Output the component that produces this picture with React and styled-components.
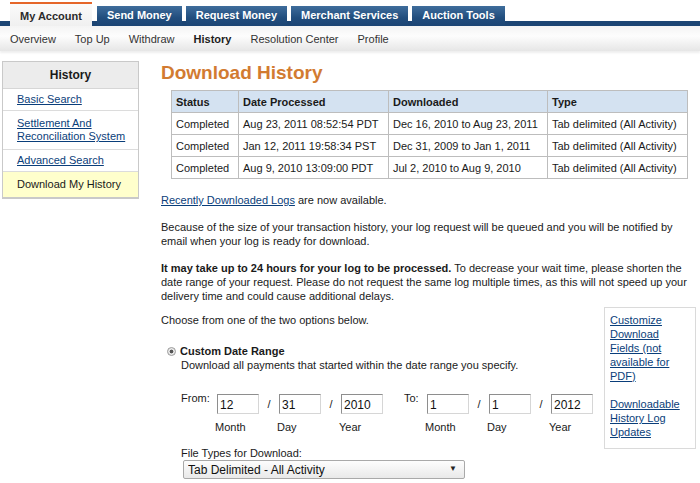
import React from 'react'
import styled, { createGlobalStyle } from 'styled-components'

const Global = createGlobalStyle`
body {
  margin: 0;
  background: #fff;
  font-family: "Liberation Sans", Arial, sans-serif;
  font-size: 11px;
  color: #1a1a1a;
}
`;

const Page = styled.div`
width: 700px;
`;

const TabBar = styled.div`
display: flex;
align-items: flex-end;
gap: 4px;
height: 24px;
padding: 2px 0 0 10px;
background: linear-gradient(to bottom, transparent 21px, #1c4574 21px);
`;

const Tab = styled.div`
box-sizing: border-box;
padding: 0 10px;
font-weight: bold;
font-size: 11px;
display: flex;
align-items: center;
${p => p.active ? `
  height: 24px;
  padding-top: 2px;
  border-top: 2px solid #e5662a;
  background: linear-gradient(#fbfbfb, #f0f0f0);
  color: #2b2b2b;
  margin-right: 1px;
` : `
  height: 20px;
  padding-bottom: 3px;
  background: linear-gradient(#3f6d9c, #214d7d 60%, #1c4574);
  color: #fff;
`}
`;

const SubNav = styled.div`
display: flex;
gap: 19px;
height: 24px;
align-items: center;
padding: 1px 0 0 10px;
background: linear-gradient(#f4f4f4, #fdfdfd 40%, #e6e6e6);
box-shadow: 0 2px 2px rgba(0, 0, 0, 0.07);
`;

const SubItem = styled.span`
color: ${p => p.active ? '#1e1e1e' : '#333'};
font-weight: ${p => p.active ? 'bold' : 'normal'};
`;

const Body = styled.div`
display: flex;
align-items: flex-start;
padding-top: 10px;
`;

const Sidebar = styled.div`
box-sizing: border-box;
width: 137px;
margin-left: 2px;
border: 1px solid #c9c9c9;
border-bottom-width: 2px;
`;

const SideHead = styled.div`
height: 26px;
line-height: 26px;
text-align: center;
font-weight: bold;
font-size: 12px;
background: #ececec;
border-bottom: 1px solid #d6d6d6;
`;

const SideItem = styled.div`
padding: ${p => p.pad}px 4px ${p => p.pad}px 14px;
line-height: 13px;
border-bottom: ${p => p.last ? 'none' : '1px solid #dcdcdc'};
background: ${p => p.current ? '#ffffcc' : '#fff'};
`;

const Link = styled.a`
color: #0a3e7a;
text-decoration: underline;
cursor: pointer;
`;

const Main = styled.div`
margin-left: 22px;
width: 536px;
`;

const Title = styled.h1`
margin: 0;
font-size: 19px;
line-height: 24px;
font-weight: bold;
color: #d27b31;
`;

const Table = styled.table`
margin: 5px 0 0 10px;
width: 516px;
border-collapse: collapse;
table-layout: fixed;
`;

const Th = styled.th`
background: #d4e2f1;
text-align: left;
font-weight: bold;
border: 1px solid #bdbdbd;
padding: 0 4px;
height: 21px;
`;

const Td = styled.td`
border: 1px solid #bdbdbd;
padding: 0 4px;
height: 21px;
white-space: nowrap;
`;

const Para = styled.p`
margin: ${p => p.top || 13}px 0 0;
line-height: 14px;
width: 528px;
`;

const OptionsRow = styled.div`
display: flex;
justify-content: space-between;
align-items: flex-start;
margin-top: 10px;
`;

const OptionsCol = styled.div`
width: 440px;
`;

const Choose = styled.div`
line-height: 14px;
`;

const OptionHead = styled.label`
display: flex;
align-items: center;
margin: 17px 0 0 6px;
font-weight: bold;
line-height: 14px;
`;

const Radio = styled.span`
box-sizing: border-box;
width: 9px;
height: 9px;
border-radius: 50%;
border: 1px solid #9a9a9a;
background: radial-gradient(circle, #555 0 1.6px, #e8e8e8 2.2px);
margin-right: 4px;
`;

const OptionBody = styled.div`
margin-left: 20px;
`;

const Desc = styled.div`
line-height: 14px;
`;

const DateRow = styled.div`
display: flex;
align-items: flex-start;
margin-top: 19px;
`;

const RangeLabel = styled.div`
width: ${p => p.w}px;
line-height: 14px;
`;

const Field = styled.div`
display: flex;
flex-direction: column;
padding-top: 3px;
`;

const Input = styled.input`
box-sizing: border-box;
width: 42px;
height: 20px;
padding: 1px 2px 0;
font-family: "Liberation Sans", Arial, sans-serif;
font-size: 12px;
color: #111;
border: 1px solid #d6d6d6;
border-top-color: #8e8e8e;
border-left-color: #8e8e8e;
background: #fff;
outline: none;
`;

const Caption = styled.span`
margin-top: 6px;
margin-left: -2px;
line-height: 14px;
`;

const Slash = styled.span`
width: 20px;
text-align: center;
line-height: 20px;
margin-top: 3px;
`;

const Spacer = styled.span`
width: 21px;
`;

const FileLabel = styled.div`
margin-top: 12px;
line-height: 14px;
`;

const SelectWrap = styled.div`
position: relative;
width: 282px;
margin: 0 0 0 2px;
`;

const Select = styled.select`
appearance: none;
box-sizing: border-box;
width: 100%;
height: 19px;
padding: 0 4px;
font-family: "Liberation Sans", Arial, sans-serif;
font-size: 12px;
color: #111;
border: 1px solid #a9a9a9;
border-radius: 2px;
background: linear-gradient(#fdfdfd, #e9e9e9);
`;

const Arrow = styled.span`
position: absolute;
right: 8px;
top: 4px;
font-size: 8px;
color: #222;
pointer-events: none;
`;

const SideBox = styled.div`
box-sizing: border-box;
width: 92px;
margin-top: -6px;
margin-right: 1px;
padding: 5px 4px 9px 5px;
border: 1px solid #dadada;
line-height: 14px;
`;

const Gap = styled.div`
height: 14px;
`;

const rows = [
  ['Completed', 'Aug 23, 2011 08:52:54 PDT', 'Dec 16, 2010 to Aug 23, 2011', 'Tab delimited (All Activity)'],
  ['Completed', 'Jan 12, 2011 19:58:34 PST', 'Dec 31, 2009 to Jan 1, 2011', 'Tab delimited (All Activity)'],
  ['Completed', 'Aug 9, 2010 13:09:00 PDT', 'Jul 2, 2010 to Aug 9, 2010', 'Tab delimited (All Activity)'],
];

const DateGroup = ({ label, w, values }) => (
  <>
    <RangeLabel w={w}>{label}</RangeLabel>
    {values.map((v, i) => (
      <React.Fragment key={i}>
        {i > 0 && <Slash>/</Slash>}
        <Field>
          <Input defaultValue={v} />
          <Caption>{['Month', 'Day', 'Year'][i]}</Caption>
        </Field>
      </React.Fragment>
    ))}
  </>
);

const App = () => {
  return (
    <Page>
      <Global />
      <TabBar>
        <Tab active>My Account</Tab>
        <Tab>Send Money</Tab>
        <Tab>Request Money</Tab>
        <Tab>Merchant Services</Tab>
        <Tab>Auction Tools</Tab>
      </TabBar>
      <SubNav>
        <SubItem>Overview</SubItem>
        <SubItem>Top Up</SubItem>
        <SubItem>Withdraw</SubItem>
        <SubItem active>History</SubItem>
        <SubItem>Resolution Center</SubItem>
        <SubItem>Profile</SubItem>
      </SubNav>
      <Body>
        <Sidebar>
          <SideHead>History</SideHead>
          <SideItem pad={4}><Link>Basic Search</Link></SideItem>
          <SideItem pad={6}><Link>Settlement And Reconciliation System</Link></SideItem>
          <SideItem pad={4}><Link>Advanced Search</Link></SideItem>
          <SideItem pad={6} current last>Download My History</SideItem>
        </Sidebar>
        <Main>
          <Title>Download History</Title>
          <Table>
            <colgroup>
              <col style={{ width: 67 }} />
              <col style={{ width: 150 }} />
              <col style={{ width: 159 }} />
              <col style={{ width: 140 }} />
            </colgroup>
            <thead>
              <tr>
                <Th>Status</Th>
                <Th>Date Processed</Th>
                <Th>Downloaded</Th>
                <Th>Type</Th>
              </tr>
            </thead>
            <tbody>
              {rows.map((r, i) => (
                <tr key={i}>
                  {r.map((c, j) => <Td key={j}>{c}</Td>)}
                </tr>
              ))}
            </tbody>
          </Table>
          <Para top={14}><Link>Recently Downloaded Logs</Link> are now available.</Para>
          <Para>Because of the size of your transaction history, your log request will be queued and you will be notified by email when your log is ready for download.</Para>
          <Para><b>It may take up to 24 hours for your log to be processed.</b> To decrease your wait time, please shorten the date range of your request. Please do not request the same log multiple times, as this will not speed up your delivery time and could cause additional delays.</Para>
          <OptionsRow>
            <OptionsCol>
              <Choose>Choose from one of the two options below.</Choose>
              <OptionHead><Radio />Custom Date Range</OptionHead>
              <OptionBody>
                <Desc>Download all payments that started within the date range you specify.</Desc>
                <DateRow>
                  <DateGroup label="From:" w={36} values={['12', '31', '2010']} />
                  <Spacer />
                  <DateGroup label="To:" w={23} values={['1', '1', '2012']} />
                </DateRow>
                <FileLabel>File Types for Download:</FileLabel>
                <SelectWrap>
                  <Select defaultValue="tab">
                    <option value="tab">Tab Delimited - All Activity</option>
                  </Select>
                  <Arrow>▼</Arrow>
                </SelectWrap>
              </OptionBody>
            </OptionsCol>
            <SideBox>
              <Link>Customize Download Fields (not available for PDF)</Link>
              <Gap />
              <Link>Downloadable History Log Updates</Link>
            </SideBox>
          </OptionsRow>
        </Main>
      </Body>
    </Page>
  )
}

export default App
